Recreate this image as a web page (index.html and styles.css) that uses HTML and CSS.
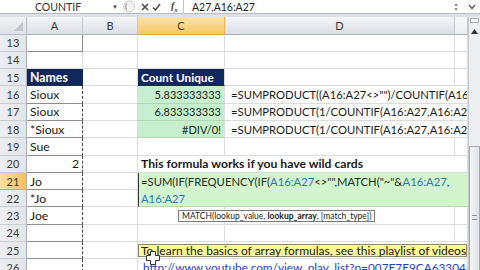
FILE: index.html
```html
<!DOCTYPE html>
<html>
<head>
<meta charset="utf-8">
<link rel="stylesheet" href="styles.css">
</head>
<body>
<div class="app">
  <div class="fbar">
    <div class="namebox"><span class="nbtext">COUNTIF</span><span class="dd">▼</span></div>
    <svg class="grip" width="14" height="13" viewBox="0 0 14 13"><circle cx="7" cy="6.5" r="5.5" fill="#f4f4f4" stroke="#c9c9c9"/><path d="M5 3.5a4 4 0 0 0 0 6" fill="none" stroke="#9a9a9a" stroke-width="1.2"/></svg>
    <div class="fbtns">
      <svg width="8" height="8" viewBox="0 0 8 8"><path d="M1 1L7 7M7 1L1 7" stroke="#4a4a4a" stroke-width="1.6"/></svg>
      <svg width="9" height="8" viewBox="0 0 9 8"><path d="M1 4.5L3.5 7L8 1" fill="none" stroke="#4a4a4a" stroke-width="1.5"/></svg>
      <span class="fx">f<sub>x</sub></span>
    </div>
    <div class="ftext">A27,A16:A27</div>
    <div class="fscroll"><span>▲</span><span>▼</span></div>
    <svg class="expand" width="8" height="6" viewBox="0 0 8 6"><path d="M1 1L4 4.5L7 1" fill="none" stroke="#555" stroke-width="1.3"/></svg>
  </div>
  <div class="sep"></div>
  <div class="main">
    <div class="sheet">
      <div class="corner"><span class="tri"></span></div>
      <div class="ch">A</div><div class="ch">B</div><div class="ch sel">C</div><div class="ch">D</div><div class="ch e"></div>

      <div class="rh">13</div><div class="c a13"></div><div class="c"></div><div class="c"></div><div class="c"></div><div class="c"></div>
      <div class="rh">14</div><div class="c"></div><div class="c"></div><div class="c"></div><div class="c"></div><div class="c"></div>
      <div class="rh">15</div><div class="c navy a15">Names</div><div class="c"></div><div class="c navy">Count Unique</div><div class="c"></div><div class="c"></div>
      <div class="rh">16</div><div class="c ma">Sioux</div><div class="c"></div><div class="c green num">5.833333333</div><div class="c span2 fml">=SUMPRODUCT((A16:A27&lt;&gt;"")/COUNTIF(A16:A27,A16:A27&amp;""))</div>
      <div class="rh">17</div><div class="c ma">Sioux</div><div class="c"></div><div class="c green num">6.833333333</div><div class="c span2 fml">=SUMPRODUCT(1/COUNTIF(A16:A27,A16:A27))</div>
      <div class="rh">18</div><div class="c ma">*Sioux</div><div class="c"></div><div class="c green num">#DIV/0!</div><div class="c span2 fml">=SUMPRODUCT(1/COUNTIF(A16:A27,A16:A27))</div>
      <div class="rh">19</div><div class="c ma">Sue</div><div class="c"></div><div class="c"></div><div class="c"></div><div class="c"></div>
      <div class="rh">20</div><div class="c ma num">2</div><div class="c"></div><div class="c span3 bold">This formula works if you have wild cards</div>
      <div class="rh sel">21</div><div class="c ma">Jo</div><div class="c"></div>
      <div class="edit">=SUM(IF(FREQUENCY(IF(<span class="ref">A16:A27</span>&lt;&gt;"",MATCH("~"&amp;<span class="ref">A16:A27</span>,<br><span class="ref">A16:A27</span></div>
      <div class="rh">22</div><div class="c ma">*Jo</div><div class="c"></div>
      <div class="rh">23</div><div class="c ma">Joe</div><div class="c"></div><div class="c"></div><div class="c"></div><div class="c"></div>
      <div class="rh">24</div><div class="c ma"></div><div class="c"></div><div class="c"></div><div class="c"></div><div class="c"></div>
      <div class="rh">25</div><div class="c ma"></div><div class="c"></div><div class="c span3 note"><span>To learn the basics of array formulas, see this playlist of videos</span></div>
      <div class="rh">26</div><div class="c ma"></div><div class="c"></div><div class="c span3 link"><span>http://www.youtube.com/view_play_list?p=007E7E9CA63304</span></div>

      <div class="tip">MATCH(lookup_value, <b>lookup_array</b>, [match_type])</div>
      <svg class="cursor" width="14" height="14" viewBox="0 0 14 14"><path d="M4.5 0.5h5v4h4v5h-4v4h-5v-4h-4v-5h4z" fill="#fff" stroke="#333"/></svg>
    </div>
    <div class="vscroll">
      <div class="split"></div>
      <svg class="up" width="7" height="5" viewBox="0 0 7 5"><path d="M0 5L3.5 0L7 5z" fill="#333"/></svg>
      <div class="thumb"><span class="grips"></span></div>
    </div>
  </div>
</div>
</body>
</html>
```
FILE: styles.css
```css
* { box-sizing: border-box; margin: 0; padding: 0; }
html, body { width: 480px; height: 270px; overflow: hidden; }
body {
  font-family: Lato, "Liberation Sans", sans-serif;
  font-size: 12.2px;
  color: #1a1a1a;
  background: #fff;
}
.app { display: flex; flex-direction: column; height: 270px; }

/* formula bar */
.fbar {
  height: 14px;
  display: flex;
  align-items: center;
  background: #fff;
  border-bottom: 1px solid #b8bcc2;
  position: relative;
}
.namebox {
  width: 121px;
  height: 13px;
  display: flex;
  align-items: center;
  padding-left: 35px;
  font-size: 10.5px;
  color: #333;
}
.nbtext { flex: 1; }
.dd { font-size: 6px; color: #444; margin-right: 3px; }
.grip { margin-left: 1px; }
.fbtns {
  display: flex;
  align-items: center;
  gap: 2px;
  width: 48px;
  height: 14px;
  padding-left: 5px;
  border-right: 1px solid #c4c7cc;
}
.fbtns svg:first-child { margin-right: 1px; }
.fx {
  font-family: "Liberation Serif", serif;
  font-style: italic;
  font-weight: bold;
  font-size: 10px;
  color: #444;
  margin-left: 8px;
}
.fx sub { font-size: 7px; }
.ftext {
  flex: 1;
  padding-left: 8px;
  font-size: 10.5px;
  color: #222;
}
.fscroll {
  display: flex;
  flex-direction: column;
  align-items: center;
  width: 12px;
  font-size: 5px;
  line-height: 5px;
  color: #777;
  margin-right: 6px;
}
.expand { margin-right: 4px; }
.sep { height: 3px; background: #dde1e6; }

/* sheet */
.main { display: flex; flex: 1; min-height: 0; }
.sheet {
  position: relative;
  width: 468px;
  display: grid;
  grid-template-columns: 27px 56px 55px 87px 230px 13px;
  grid-template-rows: 17.5px repeat(14, 17.3px);
  align-content: start;
  overflow: hidden;
}
.corner {
  background: linear-gradient(#f2f3f5, #dde0e4);
  border-right: 1px solid #b9bec6;
  border-bottom: 1px solid #b9bec6;
  position: relative;
}
.tri {
  position: absolute;
  right: 3px;
  bottom: 3px;
  width: 0;
  height: 0;
  border-left: 9px solid transparent;
  border-bottom: 9px solid #c3c7cd;
}
.ch {
  background: linear-gradient(#f4f5f7, #dcdfe4);
  border-right: 1px solid #c3c8cf;
  border-bottom: 1px solid #a9b0ba;
  display: flex;
  align-items: center;
  justify-content: center;
  color: #3a3a3a;
  font-size: 11px;
}
.ch.sel {
  background: linear-gradient(#fbe3a9, #f5c864);
  border-bottom: 1px solid #e0a93c;
  border-right: 1px solid #e0b060;
  color: #4a3b10;
}
.ch.e { background: linear-gradient(#f7f8f9, #eceef1); }
.rh {
  background: linear-gradient(90deg, #eceef1, #e2e5e9);
  border-right: 1px solid #a9b0ba;
  border-bottom: 1px solid #c8cdd4;
  display: flex;
  align-items: center;
  justify-content: center;
  color: #3a3a3a;
  font-size: 11px;
}
.rh.sel {
  background: linear-gradient(90deg, #fbe0a0, #f4c25c);
  border-bottom: 1px solid #e0a93c;
}
.c {
  border-right: 1px solid #dadcdf;
  border-bottom: 1px solid #dadcdf;
  display: flex;
  align-items: center;
  padding: 0 3px;
  white-space: nowrap;
  overflow: hidden;
}
.a13 { border-right: 1px solid #8a8a8a; border-bottom: 1px solid #8a8a8a; }
.navy { background: #10295a; color: #fff; font-weight: bold; font-size: 11.8px; border-bottom-color: #10295a; }
.a15 { border-bottom: 1px dashed #333; border-right: 1px solid #10295a; font-size: 12.3px; }
.ma { border-right: 1px dashed #4a4a4a; border-bottom: 1px solid #8f8f8f; }
.num { justify-content: flex-end; }
.green { background: #c6efce; color: #1b2b1b; border-bottom-color: #b3d8b8; font-size: 11px; }
.span2 { grid-column: span 2; }
.span3 { grid-column: span 3; overflow: visible; }
.fml { overflow: hidden; padding-left: 6px; font-size: 11.25px; }
.bold { font-weight: bold; font-size: 12.2px; }
.edit {
  grid-column: span 3;
  grid-row: span 2;
  background: #d3f5cd;
  border-left: 1px solid #333;
  border-bottom: 1px solid #b9d9b4;
  padding: 0 2px;
  font-size: 11.25px;
  line-height: 17.3px;
  white-space: nowrap;
  overflow: hidden;
  color: #1e2f1e;
}
.ref { color: #2d77b1; }
.note { padding: 2px 0 1px 0; font-size: 12px; }
.note span {
  flex: 1;
  height: 100%;
  background: #fbf89c;
  border: 1px solid #8d8b63;
  display: flex;
  align-items: center;
  padding-left: 2px;
}
.link { padding-left: 5px; font-size: 11.8px; }
.link span { color: #1f3fbf; text-decoration: underline; }
.tip {
  position: absolute;
  left: 178px;
  top: 193px;
  height: 12px;
  padding: 0 3px;
  background: #fff;
  border: 1px solid #7a7a7a;
  font-size: 8.5px;
  line-height: 10px;
  color: #222;
  white-space: nowrap;
}
.cursor { position: absolute; left: 146px; top: 234px; }

/* scrollbar */
.vscroll {
  width: 12px;
  background: #eceef1;
  border-left: 1px solid #c5c9cf;
  position: relative;
  display: flex;
  flex-direction: column;
  align-items: center;
}
.split { width: 9px; height: 5px; border: 1px solid #a8adb5; background: #f7f7f7; margin-top: 1px; }
.up { margin-top: 6px; }
.thumb {
  margin-top: 112px;
  width: 11px;
  flex: 1;
  background: linear-gradient(90deg, #f4f5f7, #dfe2e6);
  border: 1px solid #a5abb3;
  border-bottom: none;
  display: flex;
  justify-content: center;
  padding-top: 68px;
}
.grips {
  width: 5px;
  height: 5px;
  border-top: 1px solid #8a8f96;
  border-bottom: 1px solid #8a8f96;
  position: relative;
}
```
